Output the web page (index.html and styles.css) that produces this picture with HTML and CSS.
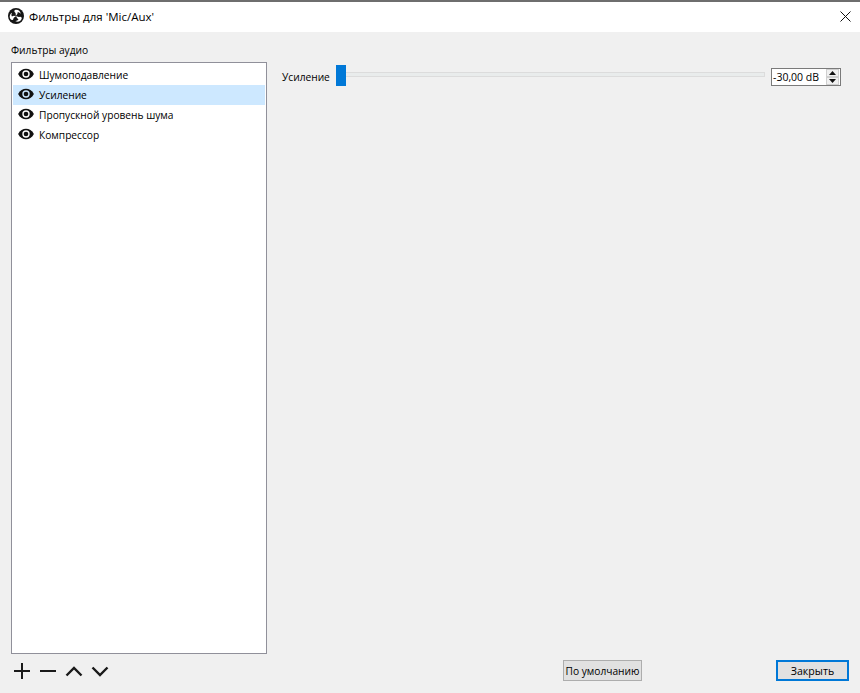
FILE: index.html
```html
<!DOCTYPE html>
<html lang="ru">
<head>
<meta charset="utf-8">
<title>Фильтры</title>
<link rel="stylesheet" href="styles.css">
</head>
<body>
<div class="window">
  <header class="titlebar">
    <svg class="logo" width="16" height="16" viewBox="0 0 20 20">
      <circle cx="10" cy="10" r="10" fill="#151515"/>
      <g fill="#fff">
        <path id="blade" d="M9.300 2.200C12.800 1.600 16 4 15.900 7.800C15 6 13.700 5.200 12 5.300C12.100 7.400 11.200 8.800 9.500 9.700C10 7.500 9.500 6 8.500 5.300C7.400 4.500 7.800 2.600 9.300 2.200z"/>
        <path d="M9.300 2.200C12.800 1.600 16 4 15.900 7.800C15 6 13.700 5.200 12 5.300C12.100 7.400 11.200 8.800 9.500 9.700C10 7.500 9.500 6 8.500 5.300C7.400 4.500 7.800 2.600 9.300 2.200z" transform="rotate(120 10 10)"/>
        <path d="M9.300 2.200C12.800 1.600 16 4 15.900 7.800C15 6 13.700 5.200 12 5.300C12.100 7.400 11.200 8.800 9.500 9.700C10 7.500 9.500 6 8.500 5.300C7.400 4.500 7.800 2.600 9.300 2.200z" transform="rotate(240 10 10)"/>
      </g>
    </svg>
    <span class="title">Фильтры для 'Mic/Aux'</span>
    <svg class="close" width="11" height="11" viewBox="0 0 11 11">
      <path d="M.5.5l10 10M10.500.5l-10 10" stroke="#111" stroke-width="1" fill="none"/>
    </svg>
  </header>
  <main class="content">
    <section class="left">
      <div class="group-label">Фильтры аудио</div>
      <ul class="list">
        <li class="item"><svg class="eye" width="16" height="12" viewBox="0 0 16 12"><path d="M.1 6C2 2.200 5 .7 8 .7s6 1.500 7.900 5.300C14 9.800 11 11.300 8 11.300S2 9.800.1 6z" fill="#111"/><circle cx="8" cy="6" r="3.700" fill="#fff"/><circle cx="8" cy="6" r="2.300" fill="#111"/></svg><span>Шумоподавление</span></li>
        <li class="item selected"><svg class="eye" width="16" height="12" viewBox="0 0 16 12"><path d="M.1 6C2 2.200 5 .7 8 .7s6 1.500 7.900 5.300C14 9.800 11 11.300 8 11.300S2 9.800.1 6z" fill="#111"/><circle cx="8" cy="6" r="3.700" fill="#cde8ff"/><circle cx="8" cy="6" r="2.300" fill="#111"/></svg><span>Усиление</span></li>
        <li class="item"><svg class="eye" width="16" height="12" viewBox="0 0 16 12"><path d="M.1 6C2 2.200 5 .7 8 .7s6 1.500 7.900 5.300C14 9.800 11 11.300 8 11.300S2 9.800.1 6z" fill="#111"/><circle cx="8" cy="6" r="3.700" fill="#fff"/><circle cx="8" cy="6" r="2.300" fill="#111"/></svg><span>Пропускной уровень шума</span></li>
        <li class="item"><svg class="eye" width="16" height="12" viewBox="0 0 16 12"><path d="M.1 6C2 2.200 5 .7 8 .7s6 1.500 7.900 5.300C14 9.800 11 11.300 8 11.300S2 9.800.1 6z" fill="#111"/><circle cx="8" cy="6" r="3.700" fill="#fff"/><circle cx="8" cy="6" r="2.300" fill="#111"/></svg><span>Компрессор</span></li>
      </ul>
      <div class="tools">
        <svg class="tool" width="26" height="16" viewBox="0 0 26 16"><path d="M3 8h16M11 0v16" stroke="#1a1a1a" stroke-width="2" fill="none"/></svg>
        <svg class="tool" width="26" height="16" viewBox="0 0 26 16"><path d="M3 8h16" stroke="#1a1a1a" stroke-width="2" fill="none"/></svg>
        <svg class="tool" width="26" height="16" viewBox="0 0 26 16"><path d="M3.500 12.500L11 5l7.500 7.500" stroke="#1a1a1a" stroke-width="2.400" fill="none"/></svg>
        <svg class="tool" width="26" height="16" viewBox="0 0 26 16"><path d="M3.500 4.500L11 12l7.500-7.500" stroke="#1a1a1a" stroke-width="2.400" fill="none"/></svg>
      </div>
    </section>
    <section class="right">
      <div class="prop-row">
        <label class="prop-label">Усиление</label>
        <div class="slider"><div class="thumb"></div><div class="track"></div></div>
        <div class="spin">
          <span class="spin-value">-30,00 dB</span>
          <div class="spin-btns">
            <span class="spin-btn"><svg width="7" height="4" viewBox="0 0 7 4"><path d="M3.500 0L7 4H0z" fill="#111"/></svg></span>
            <span class="spin-btn"><svg width="7" height="4" viewBox="0 0 7 4"><path d="M0 0h7L3.500 4z" fill="#111"/></svg></span>
          </div>
        </div>
      </div>
      <div class="footer">
        <button class="btn btn-default">По умолчанию</button>
        <button class="btn btn-close">Закрыть</button>
      </div>
    </section>
  </main>
</div>
</body>
</html>
```
FILE: styles.css
```css
* { box-sizing: border-box; }
html, body { margin: 0; padding: 0; }
body {
  width: 860px;
  height: 693px;
  overflow: hidden;
  background: #f0f0f0;
  font-family: "Open Sans", "Noto Sans", sans-serif;
  font-size: 10.2px;
  color: #000;
}
.window { display: flex; flex-direction: column; height: 693px; }
.titlebar {
  height: 32px;
  flex: none;
  background: #fff;
  border-top: 2px solid #6e6e6e;
  display: flex;
  align-items: center;
  padding: 0 9px 2px 8px;
}
.logo { flex: none; }
.title { margin-left: 5px; font-size: 11.5px; flex: 1; }
.close { flex: none; }
.content { flex: 1; display: flex; min-height: 0; }
.left { width: 267px; flex: none; padding: 10px 0 0 11px; display: flex; flex-direction: column; }
.group-label { height: 20px; line-height: 16px; }
.list {
  list-style: none;
  margin: 0;
  padding: 2px 1px 0;
  width: 256px;
  height: 592px;
  flex: none;
  background: #fff;
  border: 1px solid #90909a;
}
.item { height: 20px; display: flex; align-items: center; padding-left: 5px; }
.item span { margin-left: 5px; }
.eye { flex: none; margin-top: -2px; }
.selected { background: #cde8ff; }
.tools { display: flex; margin-top: 9px; }
.tool { flex: none; }
.right { flex: 1; padding: 33px 19px 0 15px; display: flex; flex-direction: column; }
.prop-row { display: flex; align-items: center; height: 21px; }
.prop-label { width: 54px; flex: none; margin-top: 2px; }
.slider { flex: 1; position: relative; height: 21px; display: flex; align-items: center; }
.track { width: 100%; height: 5px; margin-top: -2px; background: #e9ecec; border: 1px solid #dcdcdc; }
.thumb { position: absolute; left: 0; top: 0; width: 10px; height: 21px; background: #0078d7; }
.spin {
  flex: none;
  margin: 2px 0 0 6px;
  width: 70px;
  height: 18px;
  background: #fff;
  border: 1px solid #7a7a7a;
  display: flex;
  align-items: center;
  padding-left: 1px;
}
.spin-value { flex: 1; font-size: 10.5px; white-space: nowrap; }
.spin-btns { width: 13px; height: 16px; display: flex; flex-direction: column; flex: none; margin-right: 1px; }
.spin-btn { flex: 1; background: #f0f0f0; display: flex; align-items: center; justify-content: center; border: 1px solid #cfcfcf; }
.footer { margin-top: auto; display: flex; justify-content: space-between; padding: 0 0 12px 281px; margin-right: -8px; }
.btn {
  font: inherit;
  color: #000;
  height: 21px;
  padding: 0;
  background: #e1e1e1;
  border: 1px solid #adadad;
}
.btn-default { width: 79px; }
.btn-close { width: 73px; border: 2px solid #0078d7; font-size: 10.6px; }
```
